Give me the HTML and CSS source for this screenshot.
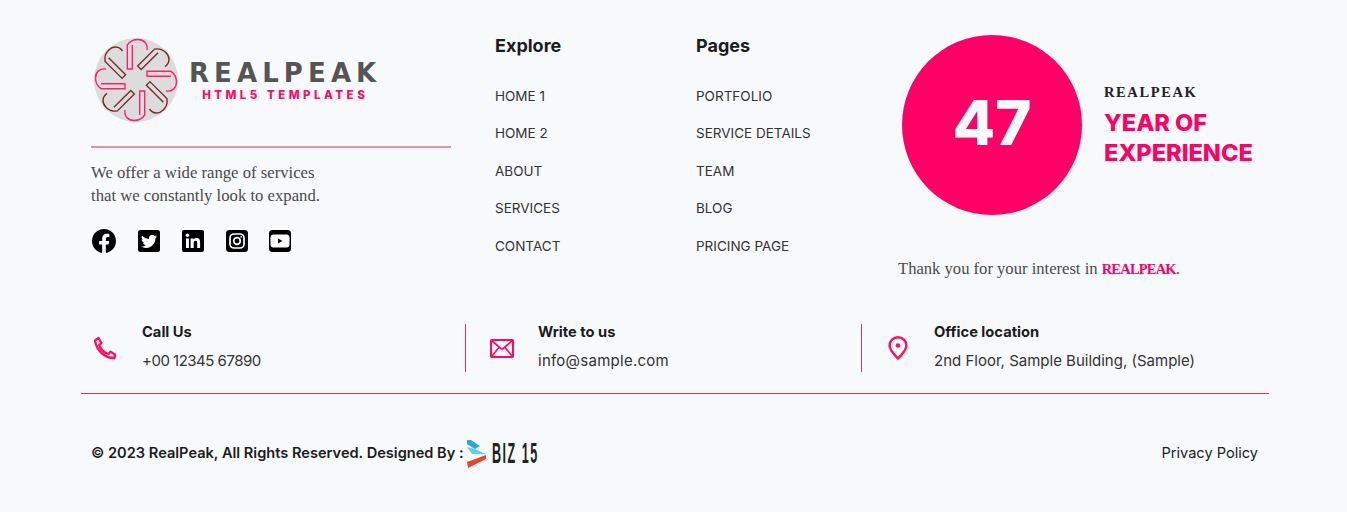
FILE: index.html
```html
<!DOCTYPE html>
<html lang="en">
<head>
    <meta charset="UTF-8">
    <meta name="viewport" content="width=device-width, initial-scale=1.0">
    <title>RealPeak Footer</title>
    <link rel="stylesheet" href="styles.css">
</head>
<body>
    <footer class="footer">
        <div class="footer-top">
            <div class="about">
                <div class="logo">
                    <svg class="logo-mark" width="84" height="84" viewBox="-42 -42 84 84" fill="none" stroke-width="1.4">
                        <defs>
                            <path id="hook" d="M-3.700-35V-11H-8.700V-35C-6-39-2-40.500 2-40.500 8-40.500 12-36 11-30"/>
                        </defs>
                        <circle r="42" fill="#dcdcdc"/>
                        <use href="#hook" stroke="#ff1f6e"/>
                        <use href="#hook" stroke="#7a2a30" transform="rotate(45)"/>
                        <use href="#hook" stroke="#ff1f6e" transform="rotate(90)"/>
                        <use href="#hook" stroke="#7a2a30" transform="rotate(135)"/>
                        <use href="#hook" stroke="#ff1f6e" transform="rotate(180)"/>
                        <use href="#hook" stroke="#7a2a30" transform="rotate(225)"/>
                        <use href="#hook" stroke="#ff1f6e" transform="rotate(270)"/>
                        <use href="#hook" stroke="#7a2a30" transform="rotate(315)"/>
                    </svg>
                    <div class="logo-text">
                        <span class="logo-name">REALPEAK</span>
                        <span class="logo-tag">HTML5 TEMPLATES</span>
                    </div>
                </div>
                <p class="about-text">We offer a wide range of services<br>that we constantly look to expand.</p>
                <div class="social">
                    <svg class="social-fb" width="24" height="24" viewBox="0 0 24 24"><path d="M24 12.07C24 5.41 18.63 0 12 0S0 5.41 0 12.07c0 6.02 4.39 11.01 10.13 11.93v-8.44H7.08v-3.49h3.05V9.41c0-3.02 1.79-4.69 4.53-4.69 1.31 0 2.68.24 2.68.24v2.97h-1.51c-1.49 0-1.96.93-1.96 1.89v2.25h3.33l-.53 3.49h-2.8V24C19.61 23.08 24 18.09 24 12.07z"/></svg>
                    <svg width="22" height="22" viewBox="0 0 22 22">
                        <rect width="22" height="22" rx="2.5"/>
                        <path fill="#fff" transform="translate(3 3.4) scale(.67)" d="M23.95 4.57a10 10 0 0 1-2.82.77 4.96 4.96 0 0 0 2.16-2.72c-.95.55-2 .95-3.12 1.17a4.92 4.92 0 0 0-8.38 4.48C7.69 8.1 4.07 6.13 1.64 3.16a4.82 4.82 0 0 0-.67 2.48c0 1.71.87 3.21 2.19 4.1a4.9 4.9 0 0 1-2.23-.61v.06c0 2.39 1.7 4.38 3.95 4.83a5 5 0 0 1-2.21.08 4.94 4.94 0 0 0 4.6 3.42A9.87 9.87 0 0 1 0 19.54a14 14 0 0 0 7.56 2.21c9.05 0 14-7.5 14-13.98 0-.21 0-.42-.02-.63a9.94 9.94 0 0 0 2.46-2.55z"/>
                    </svg>
                    <svg width="22" height="22" viewBox="0 0 22 22">
                        <rect width="22" height="22" rx="2"/>
                        <circle cx="5.4" cy="5.2" r="1.7" fill="#fff"/>
                        <path fill="#fff" d="M4 8.4h2.9V18H4zM8.6 8.4h2.8v1.3c.5-.9 1.6-1.6 3.1-1.6 3 0 3.6 2 3.6 4.6V18h-2.9v-4.7c0-1.2 0-2.6-1.6-2.6s-1.9 1.2-1.9 2.5V18H8.600z"/>
                    </svg>
                    <svg width="22" height="22" viewBox="0 0 22 22" fill="none">
                        <rect width="22" height="22" rx="3.5" fill="#000"/>
                        <rect x="4" y="4" width="14" height="14" rx="4" stroke="#fff" stroke-width="1.7"/>
                        <circle cx="11" cy="11" r="3.3" stroke="#fff" stroke-width="1.7"/>
                        <circle cx="15.2" cy="6.8" r=".9" fill="#fff"/>
                    </svg>
                    <svg class="social-yt" width="22" height="22" viewBox="0 0 22 22">
                        <rect width="22" height="22" rx="3.5"/>
                        <rect x="1.5" y="4.5" width="19" height="13" rx="3" fill="#fff"/>
                        <path d="M9 8.5l4.5 2.5L9 13.5z"/>
                    </svg>
                </div>
            </div>
            <div class="links">
                <h3>Explore</h3>
                <ul>
                    <li>HOME 1</li>
                    <li>HOME 2</li>
                    <li>ABOUT</li>
                    <li>SERVICES</li>
                    <li>CONTACT</li>
                </ul>
            </div>
            <div class="links">
                <h3>Pages</h3>
                <ul>
                    <li>PORTFOLIO</li>
                    <li>SERVICE DETAILS</li>
                    <li>TEAM</li>
                    <li>BLOG</li>
                    <li>PRICING PAGE</li>
                </ul>
            </div>
            <div class="experience">
                <div class="experience-row">
                    <div class="years">47</div>
                    <div>
                        <div class="exp-brand">REALPEAK</div>
                        <div class="exp-title">YEAR OF<br>EXPERIENCE</div>
                    </div>
                </div>
                <p class="thanks">Thank you for your interest in <strong>REALPEAK</strong>.</p>
            </div>
        </div>

        <div class="contact">
            <div class="contact-item">
                <svg class="contact-icon" width="24" height="24" viewBox="0 0 24 24" fill="none" stroke="#ff0a66" stroke-width="2.3" stroke-linejoin="round">
                    <path d="M2 4.500L5.500 2 8.500 7 6.200 9.200C8 13.500 11 16.500 15.500 18L17.500 15.800 22 18.500 21.500 22C11 22 3.500 14 2 4.500z"/>
                </svg>
                <div>
                    <h4>Call Us</h4>
                    <p class="contact-phone">+00 12345 67890</p>
                </div>
            </div>
            <div class="contact-item">
                <svg class="contact-icon" width="24" height="24" viewBox="0 0 24 24" fill="none" stroke="#ff0a66" stroke-width="2.2">
                    <rect x="1" y="4" width="22" height="17" rx="1"/>
                    <path d="M1.500 4.500L12 13.500 22.500 4.500M1.500 20.500L9 11.500M22.500 20.500L15 11.500" stroke-width="1.700"/>
                </svg>
                <div>
                    <h4>Write to us</h4>
                    <p class="contact-mail">info@sample.com</p>
                </div>
            </div>
            <div class="contact-item">
                <svg class="contact-icon" width="24" height="24" viewBox="0 0 24 24" fill="none" stroke="#ff0a66" stroke-width="2.4">
                    <path d="M12 22.500C8 18.500 3.600 14.500 3.600 9.600 3.600 4.800 7.400 1.300 12 1.300S20.400 4.800 20.400 9.600C20.400 14.500 16 18.500 12 22.500z"/>
                    <circle cx="12" cy="9.500" r="2.300" fill="#ff0a66" stroke="none"/>
                </svg>
                <div>
                    <h4>Office location</h4>
                    <p>2nd Floor, Sample Building, (Sample)</p>
                </div>
            </div>
        </div>

        <div class="footer-bottom">
            <div class="copyright">
                <span>© 2023 RealPeak, All Rights Reserved. Designed By :</span>
                <svg class="biz-logo" width="74" height="30" viewBox="0 0 74 30">
                    <path fill="#2aa7e0" d="M1 2H5L14 8 9 11 1 6z"/>
                    <path fill="#5fd0ee" d="M1 9L9 11 20 16H6z"/>
                    <path fill="#e9432e" d="M20 17V21L2 30 1 24z"/>
                    <text class="biz-text" transform="translate(26 25) scale(.42 1)">BIZ 15</text>
                </svg>
            </div>
            <span class="privacy">Privacy Policy</span>
        </div>
    </footer>
</body>
</html>
```

FILE: styles.css
```css
body {
    margin: 0;
    background: #f8f9fb;
    color: #222;
    font-family: Inter, "Open Sans", sans-serif;
}
p, h3, h4, ul {
    margin: 0;
    padding: 0;
}
.footer {
    height: 512px;
    box-sizing: border-box;
    padding: 35px 78px 0 81px;
    overflow: hidden;
}
.footer-top {
    display: grid;
    grid-template-columns: 414px 201px 206px 1fr;
    height: 289px;
}

/* about column */
.about {
    padding: 3px 0 0 10px;
}
.logo {
    display: flex;
    align-items: center;
    gap: 11px;
    width: 360px;
    padding: 0 0 24px 3px;
    box-sizing: border-box;
    border-bottom: 2px solid #ea8f9c;
}
.logo-text {
    display: flex;
    flex-direction: column;
    align-items: center;
    margin-top: 1px;
}
.logo-name {
    color: #555;
    font-family: "DejaVu Sans", sans-serif;
    font-size: 26px;
    line-height: 28px;
    font-weight: 700;
    letter-spacing: 5.1px;
}
.logo-tag {
    margin-top: 1px;
    color: #ff0a66;
    font-size: 11.5px;
    line-height: 14px;
    font-weight: 800;
    letter-spacing: 3.5px;
}
.about-text {
    margin-top: 13px;
    font-family: "Liberation Serif", serif;
    font-size: 16.7px;
    line-height: 23px;
    color: #4a4a4a;
}
.social {
    display: flex;
    align-items: center;
    gap: 22px;
    margin-top: 22px;
}
.social-fb {
    margin: 0 0 0 1px;
}
.social-yt {
    margin-left: -1px;
}

/* link columns */
.links h3 {
    font-size: 18px;
    line-height: 22px;
    font-weight: 700;
    color: #1c1c1c;
}
.links ul {
    list-style: none;
    margin-top: 30px;
}
.links li {
    font-size: 13.5px;
    line-height: 18px;
    margin-bottom: 19.4px;
    color: #333;
}

/* experience column */
.experience-row {
    display: flex;
    align-items: flex-start;
    gap: 22px;
}
.years {
    width: 180px;
    height: 180px;
    border-radius: 50%;
    background: #ff0066;
    color: #f8f9fb;
    font-size: 62px;
    font-weight: 800;
    line-height: 176px;
    text-align: center;
}
.exp-brand {
    margin-top: 48px;
    font-family: "Liberation Serif", serif;
    font-size: 14.5px;
    line-height: 18px;
    font-weight: 700;
    letter-spacing: 1.6px;
    color: #222;
}
.exp-title {
    margin-top: 7px;
    color: #ff0066;
    font-size: 23.6px;
    line-height: 30px;
    font-weight: 800;
}
.thanks {
    margin: 44px 0 0 -4px;
    font-family: "Liberation Serif", serif;
    font-size: 16.6px;
    line-height: 20px;
    color: #4a4a4a;
}
.thanks strong {
    color: #ff0066;
    font-size: 14.5px;
    letter-spacing: -.8px;
}

/* contact row */
.contact {
    display: grid;
    grid-template-columns: 385px 396px 1fr;
    height: 69px;
    border-bottom: 1px solid #d13a4e;
}
.contact-item {
    display: flex;
    align-items: center;
    gap: 24px;
    height: 48px;
    box-sizing: border-box;
    padding-left: 24px;
    border-right: 1px solid #d13a4e;
}
.contact-item > div {
    margin-top: -2px;
}
.contact-item:first-child {
    padding-left: 12px;
    gap: 25px;
}
.contact-item:last-child {
    border-right: none;
}
.contact-item h4 {
    font-size: 14.7px;
    line-height: 18px;
    font-weight: 700;
    color: #1c1c1c;
}
.contact-item p {
    margin-top: 10px;
    font-size: 15px;
    line-height: 20px;
    color: #333;
}
.contact-item .contact-phone {
    letter-spacing: -.5px;
}
.contact-item .contact-mail {
    letter-spacing: .25px;
}

/* bottom bar */
.footer-bottom {
    display: flex;
    justify-content: space-between;
    align-items: center;
    padding: 44px 11px 0 10px;
    font-size: 14.6px;
}
.copyright {
    display: flex;
    align-items: center;
    gap: 2px;
    font-weight: 600;
    color: #1c1c1c;
}
.biz-logo {
    overflow: visible;
}
.biz-text {
    font-family: "Liberation Sans", sans-serif;
    font-size: 30px;
    letter-spacing: 3.6px;
    fill: #222;
}
.privacy {
    color: #222;
}
```
